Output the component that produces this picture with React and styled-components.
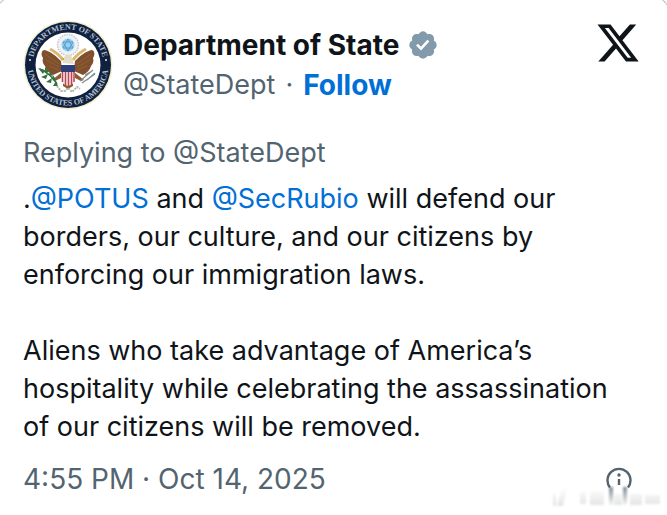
import React from "react";
import styled, { createGlobalStyle } from "styled-components";

const GlobalStyle = createGlobalStyle`
    * {
        box-sizing: border-box;
    }

    body {
        margin: 0;
        background-color: #fff;
        color: #0f1419;
        font-family: Inter, "Liberation Sans", sans-serif;
        overflow-x: hidden;
    }
`;

const Card = styled.article`
    margin: -3px -3px 0 -4px;
    padding: 22px 30px 16px 26px;
    border: 1px solid #b9c6cd;
    border-bottom: 0;
    border-radius: 16px 16px 0 0;
    background-color: #fff;
`;

const Header = styled.header`
    display: flex;
    align-items: flex-start;
    margin-bottom: 24px;
`;

const Author = styled.div`
    flex: 1;
    padding: 5px 0 0 10px;
`;

const AuthorRow = styled.div`
    display: flex;
    align-items: center;
    gap: ${({ $muted }) => ($muted ? "10px" : "8px")};
    height: 40px;
    font-size: ${({ $muted }) => ($muted ? "27px" : "28px")};
    line-height: 40px;
    color: ${({ $muted }) => ($muted ? "#536471" : "#0f1419")};
    white-space: nowrap;
`;

const Name = styled.h1`
    margin: 0;
    font-size: 28px;
    font-weight: 700;
`;

const Link = styled.a`
    color: ${({ $muted }) => ($muted ? "inherit" : "#006fd6")};
    font-size: ${({ $bold }) => ($bold ? "28px" : "inherit")};
    font-weight: ${({ $bold }) => ($bold ? 700 : 400)};
    text-decoration: none;
`;

const LogoLink = styled.a`
    display: flex;
    padding-top: 3px;
`;

const Reply = styled.p`
    margin: 0 0 8px;
    font-size: 27px;
    line-height: 38px;
    color: #536471;
`;

const Text = styled.p`
    margin: 0 0 38px;
    font-size: 27px;
    line-height: 38px;
`;

const Footer = styled.footer`
    position: relative;
    display: flex;
    align-items: flex-start;
    justify-content: space-between;
    margin-top: -24px;
    font-size: 28px;
    line-height: 38px;
    color: #536471;
`;

const InfoButton = styled.button`
    display: flex;
    padding: 6px 7px 0 0;
    border: 0;
    background: none;
    cursor: pointer;
`;

const Smudge = styled.svg`
    position: absolute;
    top: 26px;
    right: -23px;
    filter: blur(1px);
    pointer-events: none;
`;

const Seal = () => (
    <svg width="90" height="90" viewBox="0 0 90 90" role="img" aria-label="Department of State seal">
        <defs>
            <path id="ringTop" d="M9.500 45a35.500 35.500 0 0 1 71 0" />
            <path id="ringBottom" d="M4.500 45a40.500 40.500 0 0 0 81 0" />
        </defs>
        <circle cx="45" cy="45" r="44.500" fill="#f2efcf" />
        <circle cx="45" cy="45" r="43" fill="#10213f" />
        <circle cx="45" cy="45" r="32.500" fill="#fff" />
        <g fill="#b4c0d2" fontFamily="Liberation Serif, serif" fontWeight="700" fontSize="8" textAnchor="middle">
            <text><textPath href="#ringTop" startOffset="50%">DEPARTMENT OF STATE</textPath></text>
            <text><textPath href="#ringBottom" startOffset="50%">UNITED STATES OF AMERICA</textPath></text>
        </g>
        <g fill="#e8edf5">
            <circle cx="7" cy="40" r="1" />
            <circle cx="83" cy="40" r="1" />
        </g>
        <circle cx="45" cy="25" r="10.500" fill="#eef2f5" stroke="#c3cbd0" strokeWidth="1.500" strokeDasharray="1.500 1" />
        <circle cx="45" cy="25" r="6.500" fill="#9dcdec" />
        <path d="M45 19l5 9H40zM45 31l-5-9h10z" fill="none" stroke="#4e9fd3" strokeWidth="1" />
        <path d="M38 41C33 36 27 31 21 30c-3 1-3 5-1 8-1 3 0 6 2 8 1 4 4 7 8 9l9-4z" fill="#80502c" />
        <path d="M52 41c5-5 11-10 17-11 3 1 3 5 1 8 1 3 0 6-2 8-1 4-4 7-8 9l-9-4z" fill="#80502c" />
        <path d="M22 34l14 10M23 40l13 7M26 46l10 4M68 34L54 44M67 40l-13 7M64 46l-10 4" stroke="#976a3e" strokeWidth=".6" fill="none" />
        <path d="M27 29c6 3 10 7 13 11M63 29c-6 3-10 7-13 11" stroke="#d9b971" strokeWidth="3" fill="none" />
        <path d="M40 43c0-4 1-7 4-8 3-1 5 1 5 3l2 6z" fill="#e4dcc6" />
        <path d="M41 38l-3 1 3 1z" fill="#c99a2e" />
        <path d="M39 52l-10 8 3 1 8-4v9l5 3 5-3v-9l8 4 3-1-10-8z" fill="#8d5c33" />
        <path d="M38 45h14v14c0 4-4 6-7 7-3-1-7-3-7-7z" fill="#f4ebeb" />
        <path d="M39.500 51v11M42.500 51v14M45.500 51v15M48.500 51v14M51 51v11" stroke="#bd4450" strokeWidth="1.500" />
        <path d="M38 45h14v7H38z" fill="#2d3f78" />
        <path d="M17 49c7 3 12 7 17 15" fill="none" stroke="#357242" strokeWidth="1.500" />
        <path d="M15 48l7 2-2 4zM18 57l7-3-2 5zM22 47l4 5-4 1zM27 51l3 5-4-1zM23 62l6-4-1 5zM30 55l3 5-4-1zM30 66l3-5 2 5z" fill="#357242" />
        <path d="M57 61l13-11M59 63l13-9M62 55l7-4M64 60l8-7" stroke="#858c8e" strokeWidth="1.200" />
        <path d="M34 66l4 5h4l3-3 4 4 5-5 3 2" fill="none" stroke="#b7b5ac" strokeWidth="2" strokeDasharray="2 1" />
    </svg>
);

const Verified = () => (
    <svg width="32" height="32" viewBox="0 0 22 22" role="img" aria-label="Verified account">
        <path
            fill="#829aab"
            d="M20.396 11c-.018-.646-.215-1.275-.57-1.816-.354-.54-.852-.972-1.438-1.246.223-.607.27-1.264.14-1.897-.131-.634-.437-1.218-.882-1.687-.47-.445-1.053-.75-1.687-.882-.633-.13-1.290-.083-1.897.14-.273-.587-.704-1.086-1.245-1.440S11.647 1.620 11 1.604c-.646.017-1.273.213-1.813.568s-.969.854-1.240 1.440c-.608-.223-1.267-.272-1.902-.14-.635.130-1.220.436-1.690.882-.445.470-.749 1.055-.878 1.688-.130.633-.080 1.290.144 1.896-.587.274-1.087.705-1.443 1.245-.356.540-.555 1.170-.574 1.817.020.647.218 1.276.574 1.817.356.540.856.972 1.443 1.245-.224.606-.274 1.263-.144 1.896.130.634.433 1.218.877 1.688.470.443 1.054.747 1.687.878.633.132 1.290.084 1.897-.136.274.586.705 1.084 1.246 1.439.540.354 1.170.551 1.816.569.647-.016 1.276-.213 1.817-.567s.972-.854 1.245-1.440c.604.239 1.266.296 1.903.164.636-.132 1.220-.447 1.680-.907.460-.460.776-1.044.908-1.681s.075-1.299-.165-1.903c.586-.274 1.084-.705 1.439-1.246.354-.540.551-1.170.569-1.816zM9.662 14.850l-3.429-3.428 1.293-1.302 2.072 2.072 4.400-4.794 1.347 1.246z"
        />
    </svg>
);

const XLogo = () => (
    <svg width="42" height="40" viewBox="1 2 22 20" role="img" aria-label="X">
        <path
            fill="#0f1419"
            d="M18.244 2.250h3.308l-7.227 8.260 8.502 11.240H16.170l-5.214-6.817L4.990 21.750H1.680l7.730-8.835L1.254 2.250H8.080l4.713 6.231zm-1.161 17.520h1.833L7.084 4.126H5.117z"
        />
    </svg>
);

const InfoIcon = () => (
    <svg width="26" height="24" viewBox="0 0 26 24" aria-hidden="true">
        <path d="M4 21.500A11.500 11.500 0 1 1 22 21.500" fill="none" stroke="#536471" strokeWidth="2.400" />
        <circle cx="13" cy="9" r="1.700" fill="#536471" />
        <path d="M11.800 13h2.400v6h-2.400z" fill="#536471" />
    </svg>
);

const FadedMark = () => (
    <Smudge width="112" height="24" viewBox="0 0 112 24" aria-hidden="true">
        <defs>
            <linearGradient id="fadeDown" x1="0" y1="0" x2="0" y2="1">
                <stop offset="0" stopColor="#536471" stopOpacity=".75" />
                <stop offset="1" stopColor="#536471" stopOpacity=".05" />
            </linearGradient>
            <linearGradient id="fadeUp" x1="0" y1="0" x2="0" y2="1">
                <stop offset="0" stopColor="#8f8f8f" stopOpacity="0" />
                <stop offset="1" stopColor="#8f8f8f" stopOpacity=".25" />
            </linearGradient>
        </defs>
        <path d="M59 1h4v18h-4zM73 1h4v18h-4z" fill="url(#fadeDown)" />
        <path d="M3 8h3v12H3zM12 2h5l-4 18H7zM30 6h6v12h-6zM40 5h14v14H40zM64 8h8v11h-8zM80 8h12v11H80zM95 9h15v9H95z" fill="url(#fadeUp)" />
    </Smudge>
);

const App = () => {
    return (
        <>
            <GlobalStyle />
            <Card>
                <Header>
                    <Seal />
                    <Author>
                        <AuthorRow>
                            <Name>Department of State</Name>
                            <Verified />
                        </AuthorRow>
                        <AuthorRow $muted>
                            <Link href="#profile" $muted>@StateDept</Link>
                            <span>·</span>
                            <Link href="#follow" $bold>Follow</Link>
                        </AuthorRow>
                    </Author>
                    <LogoLink href="#post">
                        <XLogo />
                    </LogoLink>
                </Header>
                <Reply>Replying to @StateDept</Reply>
                <Text>
                    .<Link href="#potus">@POTUS</Link> and <Link href="#secrubio">@SecRubio</Link> will defend our
                    borders, our culture, and our citizens by enforcing our immigration laws.
                </Text>
                <Text>
                    Aliens who take advantage of America’s hospitality while celebrating the assassination of our
                    citizens will be removed.
                </Text>
                <Footer>
                    <time dateTime="2025-10-14T16:55">4:55 PM · Oct 14, 2025</time>
                    <InfoButton type="button" aria-label="Post information">
                        <InfoIcon />
                    </InfoButton>
                    <FadedMark />
                </Footer>
            </Card>
        </>
    );
};

export default App;
